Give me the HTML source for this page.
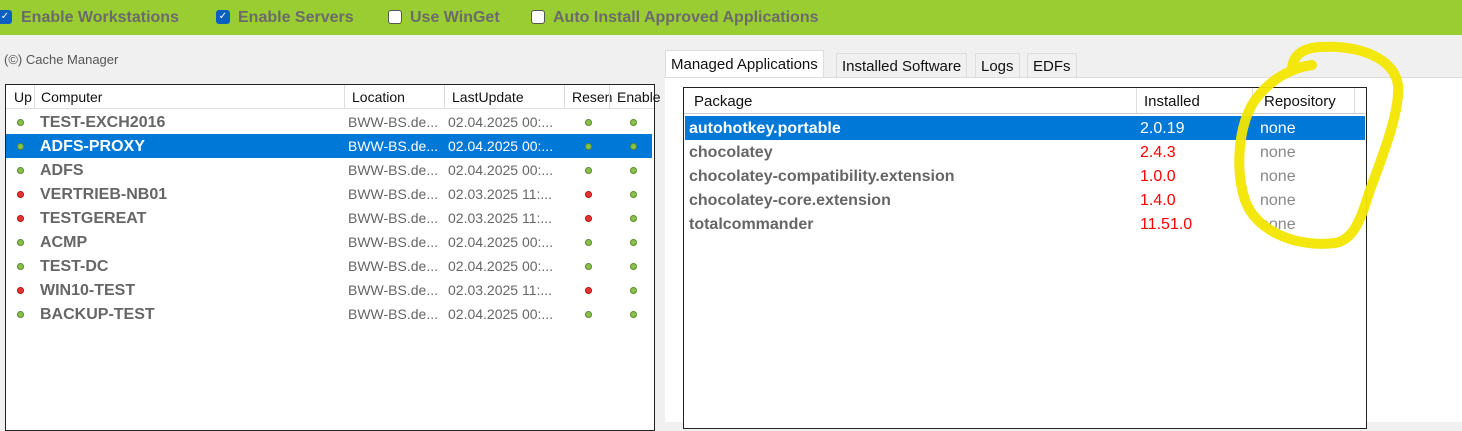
<!DOCTYPE html>
<html><head><meta charset="utf-8"><style>
body{margin:0;width:1462px;height:421px;overflow:hidden;background:#f0f0f0;font-family:"Liberation Sans",sans-serif;position:relative}
.top{position:absolute;left:0;top:0;width:1462px;height:35px;background:#9acd32}
.cb{position:absolute;top:10px;width:14px;height:14px;border:1px solid #555;border-radius:3px;background:#fff;box-sizing:border-box}
.cb.on{background:#0a5fc0;border-color:#0a5fc0;color:#fff;font-size:10px;line-height:12px;text-align:center}
.lbl{position:absolute;top:9px;font-size:16px;font-weight:bold;color:#6b6b6b}
.abs{position:absolute}
.box{position:absolute;background:#fff;border:1px solid #222}
.hdr{position:absolute;font-size:14px;color:#111}
.row{position:absolute;left:1px;right:1px;height:24px;font-size:16px;color:#666}
.row.sel{background:#0078d7;color:#fff}
.row span{position:absolute;top:4px;white-space:nowrap}
.dot{position:absolute;border-radius:50%;top:9px}
.g{background:#8bc34a;border:1px solid #5a8a2a;box-sizing:border-box;width:7px;height:7px}
.r{background:#e33;border:1px solid #a11;box-sizing:border-box;width:7px;height:7px}
.tab{position:absolute;top:53px;height:24px;background:#f0f0f0;border:1px solid #ddd;border-bottom:none;font-size:15px;color:#111;padding:4px 5px 0;box-sizing:border-box}
.red{color:#f00!important}
</style></head><body>
<div class="top"></div>
<div class="cb on" style="left:-2px">✓</div><div class="lbl" style="left:21px">Enable Workstations</div>
<div class="cb on" style="left:216px">✓</div><div class="lbl" style="left:238px">Enable Servers</div>
<div class="cb" style="left:388px"></div><div class="lbl" style="left:410px">Use WinGet</div>
<div class="cb" style="left:531px"></div><div class="lbl" style="left:553px">Auto Install Approved Applications</div>
<div class="abs" style="left:4px;top:52px;font-size:13px;color:#555">(©) Cache Manager</div>

<div class="box" style="left:5px;top:84px;width:648px;height:345px">
<div class="abs" style="left:0;top:0;right:0;height:23px;border-bottom:1px solid #ddd"></div>
<div class="hdr" style="left:8px;top:4px">Up</div>
<div class="hdr" style="left:35px;top:4px">Computer</div>
<div class="hdr" style="left:346px;top:4px">Location</div>
<div class="hdr" style="left:446px;top:4px">LastUpdate</div>
<div class="hdr" style="left:566px;top:4px">Resen</div>
<div class="hdr" style="left:611px;top:4px">Enable</div>
<div class="abs" style="left:28px;top:0;height:23px;border-left:1px solid #ddd"></div>
<div class="abs" style="left:338px;top:0;height:23px;border-left:1px solid #ddd"></div>
<div class="abs" style="left:438px;top:0;height:23px;border-left:1px solid #ddd"></div>
<div class="abs" style="left:558px;top:0;height:23px;border-left:1px solid #ddd"></div>
<div class="abs" style="left:603px;top:0;height:23px;border-left:1px solid #ddd"></div>
</div>
<div class="tab" style="left:665px;top:50px;height:28px;background:#fff;border-color:#ddd;padding-top:5px">Managed Applications</div>
<div class="tab" style="left:836px">Installed Software</div>
<div class="tab" style="left:975px">Logs</div>
<div class="tab" style="left:1027px">EDFs</div>
<div class="abs" style="left:665px;top:77px;width:797px;height:344px;background:#fff;border-top:1px solid #ddd"></div>
<div class="box" style="left:683px;top:87px;width:682px;height:340px">
<div class="abs" style="left:0;top:0;right:0;height:25px;border-bottom:1px solid #ccc"></div>
<div class="hdr" style="left:10px;top:5px;font-size:15px">Package</div>
<div class="hdr" style="left:460px;top:5px;font-size:15px">Installed</div>
<div class="hdr" style="left:580px;top:5px;font-size:15px">Repository</div>
<div class="abs" style="left:452px;top:0;height:25px;border-left:1px solid #ddd"></div>
<div class="abs" style="left:568px;top:0;height:25px;border-left:1px solid #ddd"></div>
<div class="abs" style="left:670px;top:0;height:25px;border-left:1px solid #ddd"></div>
<div class="row sel" style="top:28px"><span style="left:4px;font-weight:bold">autohotkey.portable</span><span style="left:455px">2.0.19</span><span style="left:575px">none</span></div>
<div class="row" style="top:52px"><span style="left:4px;font-weight:bold">chocolatey</span><span class="red" style="left:455px">2.4.3</span><span style="left:575px;color:#888">none</span></div>
<div class="row" style="top:76px"><span style="left:4px;font-weight:bold">chocolatey-compatibility.extension</span><span class="red" style="left:455px">1.0.0</span><span style="left:575px;color:#888">none</span></div>
<div class="row" style="top:100px"><span style="left:4px;font-weight:bold">chocolatey-core.extension</span><span class="red" style="left:455px">1.4.0</span><span style="left:575px;color:#888">none</span></div>
<div class="row" style="top:124px"><span style="left:4px;font-weight:bold">totalcommander</span><span class="red" style="left:455px">11.51.0</span><span style="left:575px;color:#888">none</span></div>
</div>
<div class="box" style="left:5px;top:84px;width:648px;height:345px;background:transparent;border:none">
<div class="row" style="top:26px"><i class="dot g" style="left:11px"></i><span style="left:34px;font-weight:bold">TEST-EXCH2016</span><span style="left:342px;font-size:14px">BWW-BS.de...</span><span style="left:442px;font-size:14px">02.04.2025 00:...</span><i class="dot g" style="left:579px"></i><i class="dot g" style="left:624px"></i></div>
<div class="row sel" style="top:50px"><i class="dot g" style="left:11px"></i><span style="left:34px;font-weight:bold">ADFS-PROXY</span><span style="left:342px;font-size:14px">BWW-BS.de...</span><span style="left:442px;font-size:14px">02.04.2025 00:...</span><i class="dot g" style="left:579px"></i><i class="dot g" style="left:624px"></i></div>
<div class="row" style="top:74px"><i class="dot g" style="left:11px"></i><span style="left:34px;font-weight:bold">ADFS</span><span style="left:342px;font-size:14px">BWW-BS.de...</span><span style="left:442px;font-size:14px">02.04.2025 00:...</span><i class="dot g" style="left:579px"></i><i class="dot g" style="left:624px"></i></div>
<div class="row" style="top:98px"><i class="dot r" style="left:11px"></i><span style="left:34px;font-weight:bold">VERTRIEB-NB01</span><span style="left:342px;font-size:14px">BWW-BS.de...</span><span style="left:442px;font-size:14px">02.03.2025 11:...</span><i class="dot r" style="left:579px"></i><i class="dot g" style="left:624px"></i></div>
<div class="row" style="top:122px"><i class="dot r" style="left:11px"></i><span style="left:34px;font-weight:bold">TESTGEREAT</span><span style="left:342px;font-size:14px">BWW-BS.de...</span><span style="left:442px;font-size:14px">02.03.2025 11:...</span><i class="dot r" style="left:579px"></i><i class="dot g" style="left:624px"></i></div>
<div class="row" style="top:146px"><i class="dot g" style="left:11px"></i><span style="left:34px;font-weight:bold">ACMP</span><span style="left:342px;font-size:14px">BWW-BS.de...</span><span style="left:442px;font-size:14px">02.04.2025 00:...</span><i class="dot g" style="left:579px"></i><i class="dot g" style="left:624px"></i></div>
<div class="row" style="top:170px"><i class="dot g" style="left:11px"></i><span style="left:34px;font-weight:bold">TEST-DC</span><span style="left:342px;font-size:14px">BWW-BS.de...</span><span style="left:442px;font-size:14px">02.04.2025 00:...</span><i class="dot g" style="left:579px"></i><i class="dot g" style="left:624px"></i></div>
<div class="row" style="top:194px"><i class="dot r" style="left:11px"></i><span style="left:34px;font-weight:bold">WIN10-TEST</span><span style="left:342px;font-size:14px">BWW-BS.de...</span><span style="left:442px;font-size:14px">02.03.2025 11:...</span><i class="dot r" style="left:579px"></i><i class="dot g" style="left:624px"></i></div>
<div class="row" style="top:218px"><i class="dot g" style="left:11px"></i><span style="left:34px;font-weight:bold">BACKUP-TEST</span><span style="left:342px;font-size:14px">BWW-BS.de...</span><span style="left:442px;font-size:14px">02.04.2025 00:...</span><i class="dot g" style="left:579px"></i><i class="dot g" style="left:624px"></i></div>
</div>
<svg class="abs" style="left:0;top:0" width="1462" height="421">
<path d="M1312 65 C1290 68 1270 80 1255 100 C1238 125 1235 170 1245 200 C1255 230 1295 248 1335 243 C1355 240 1362 215 1370 190 C1385 150 1400 110 1398 85 C1394 58 1360 45 1320 47 C1302 48 1292 56 1292 70" fill="none" stroke="#f2e600" stroke-width="10" stroke-linecap="round" opacity="0.95"/>
</svg>
</body></html>
